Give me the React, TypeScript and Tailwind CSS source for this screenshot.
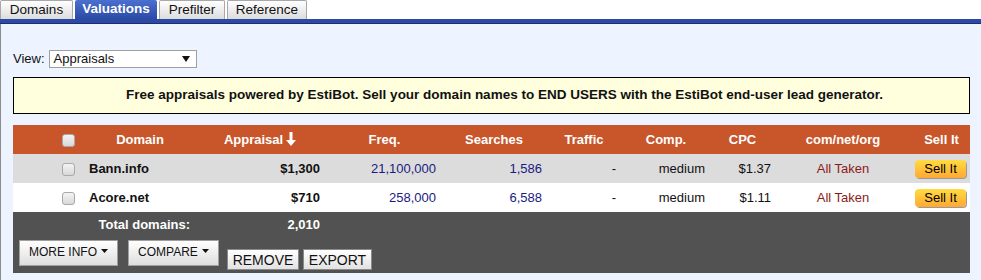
import React from "react";

type Row = {
  domain: string;
  appraisal: string;
  freq: string;
  searches: string;
  traffic: string;
  comp: string;
  cpc: string;
  tld: string;
};

const rows: Row[] = [
  { domain: "Bann.info", appraisal: "$1,300", freq: "21,100,000", searches: "1,586", traffic: "-", comp: "medium", cpc: "$1.37", tld: "All Taken" },
  { domain: "Acore.net", appraisal: "$710", freq: "258,000", searches: "6,588", traffic: "-", comp: "medium", cpc: "$1.11", tld: "All Taken" },
];

const tabs = [
  { label: "Domains", w: "w-[73px]" },
  { label: "Valuations", w: "w-[82px]" },
  { label: "Prefilter", w: "w-[66px]" },
  { label: "Reference", w: "w-[80px]" },
];

const Check = () => (
  <span className="inline-block w-[13px] h-[13px] rounded-[3px] border border-[#a9a9a9] bg-gradient-to-b from-[#f4f4f4] to-[#d8d8d8] align-middle" />
);

const Caret = () => (
  <svg width="7" height="4" viewBox="0 0 7 4" className="inline-block ml-[4px] mb-[2px]">
    <path d="M0 0H7L3.5 4Z" fill="#111" />
  </svg>
);

const App = () => {
  return (
    <div className="w-[981px] h-[280px] overflow-hidden bg-[#edf4ff] font-['Liberation_Sans',Arial,sans-serif] text-[13px] text-[#111]">
      <div className="flex h-[19px] bg-white">
        {tabs.map((t) =>
          t.label === "Valuations" ? (
            <div
              key={t.label}
              className={`ml-[2px] ${t.w} flex items-center justify-center bg-gradient-to-b from-[#4a70d0] to-[#2b4aa5] text-white font-bold text-[13.5px] rounded-t-[2px]`}
            >
              {t.label}
            </div>
          ) : (
            <div
              key={t.label}
              className={`ml-[2px] first:ml-0 ${t.w} flex items-center justify-center bg-gradient-to-b from-white to-[#dcdcdc] border border-b-0 border-[#a8a8a8] text-[#111] text-[13.5px] rounded-t-[2px]`}
            >
              {t.label}
            </div>
          )
        )}
      </div>
      <div className="h-[5px] bg-[#2b4aa5] border-b border-[#1d2e6a]" />
      <div className="border-l border-[#8c8c8c] pl-[12px] pr-[11px] h-[256px]">
        <div className="flex items-center pt-[25px] h-[44px]">
          <span className="mr-[4px]">View:</span>
          <div className="w-[148px] h-[18px] bg-white border border-[#a0a0a0] flex items-center justify-between pl-[4px] pr-[6px]">
            <span>Appraisals</span>
            <svg width="8" height="6" viewBox="0 0 8 6">
              <path d="M0 0H8L4 6Z" fill="#111" />
            </svg>
          </div>
        </div>
        <div className="mt-[9px] h-[37px] bg-[#ffffdd] border border-black flex items-center justify-center pl-[26px] font-bold text-[13.5px]">
          Free appraisals powered by EstiBot. Sell your domain names to END USERS with the EstiBot end-user lead generator.
        </div>
        <table className="mt-[11px] w-[957px] table-fixed border-collapse">
          <colgroup>
            <col className="w-[76px]" />
            <col className="w-[102px]" />
            <col className="w-[138px]" />
            <col className="w-[111px]" />
            <col className="w-[108px]" />
            <col className="w-[72px]" />
            <col className="w-[92px]" />
            <col className="w-[61px]" />
            <col className="w-[140px]" />
            <col className="w-[57px]" />
          </colgroup>
          <thead>
            <tr className="h-[29px] bg-[#c8562a] text-white font-bold">
              <th className="pl-[49px] text-left"><Check /></th>
              <th className="text-center">Domain</th>
              <th className="text-center">
                Appraisal
                <svg width="10" height="14" viewBox="0 0 10 14" className="inline-block ml-[3px] align-[-2px]">
                  <path d="M3.5 0H6.5V8H10L5 14L0 8H3.5Z" fill="#fff" />
                </svg>
              </th>
              <th className="text-center">Freq.</th>
              <th className="text-center">Searches</th>
              <th className="text-center">Traffic</th>
              <th className="text-center">Comp.</th>
              <th className="text-center">CPC</th>
              <th className="text-center">com/net/org</th>
              <th className="text-center">Sell It</th>
            </tr>
          </thead>
          <tbody>
            {rows.map((r, i) => (
              <tr key={r.domain} className={`h-[29px] ${i % 2 === 0 ? "bg-[#dcdcdc]" : "bg-white"}`}>
                <td className="pl-[49px]"><Check /></td>
                <td className="font-bold">{r.domain}</td>
                <td className="text-right pr-[9px] font-bold">{r.appraisal}</td>
                <td className="text-right pr-[4px] text-[#1a1a80]">{r.freq}</td>
                <td className="text-right pr-[6px] text-[#1a1a80]">{r.searches}</td>
                <td className="text-right pr-[4px]">{r.traffic}</td>
                <td className="text-right pr-[7px]">{r.comp}</td>
                <td className="text-right pr-[2px]">{r.cpc}</td>
                <td className="text-center text-[#8b1a1a]">{r.tld}</td>
                <td className="text-left pl-[2px]">
                  <span className="inline-flex items-center justify-center w-[51px] h-[18px] rounded-[4px] bg-gradient-to-b from-[#ffdc40] to-[#ffa833] shadow-[1px_1px_0_#9a9a9a] text-[13px] text-black">
                    Sell It
                  </span>
                </td>
              </tr>
            ))}
          </tbody>
        </table>
        <div className="w-[957px] h-[61px] bg-[#525252] pt-[4px]">
          <div className="flex h-[17px] items-center text-white font-bold">
            <span className="w-[178px] text-right pr-[1px]">Total domains:</span>
            <span className="w-[138px] text-right pr-[9px]">2,010</span>
          </div>
          <div className="flex items-start mt-[7px] pl-[6px]">
            <button className="w-[99px] h-[26px] bg-gradient-to-b from-white to-[#dedede] border border-[#a0a0a0] text-[12px] text-[#111] pb-[3px]">
              MORE INFO<Caret />
            </button>
            <button className="ml-[10px] w-[91px] h-[26px] bg-gradient-to-b from-white to-[#dedede] border border-[#a0a0a0] text-[12px] text-[#111] pb-[3px]">
              COMPARE<Caret />
            </button>
            <button className="ml-[8px] mt-[9px] w-[72px] h-[21px] bg-gradient-to-b from-white to-[#e2e2e2] border border-[#8a8a8a] text-[14px] text-[#111]">
              REMOVE
            </button>
            <button className="ml-[4px] mt-[9px] w-[69px] h-[21px] bg-gradient-to-b from-white to-[#e2e2e2] border border-[#8a8a8a] text-[14px] text-[#111]">
              EXPORT
            </button>
          </div>
        </div>
      </div>
    </div>
  );
};

export default App;
